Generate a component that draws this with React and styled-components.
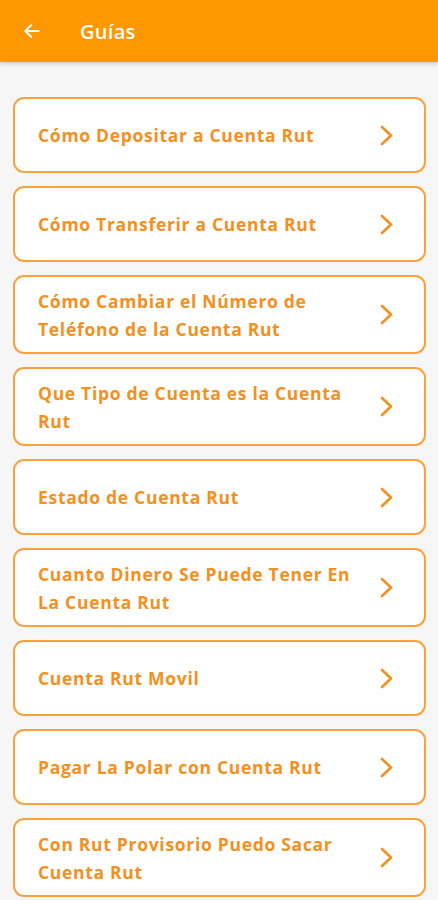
import React from "react";
import styled, { createGlobalStyle } from "styled-components";

const GlobalStyle = createGlobalStyle`
  body {
    margin: 0;
    background: #f6f6f6;
    font-family: "Open Sans", "Lato", sans-serif;
  }
`;

const Header = styled.header`
  height: 62px;
  background: #ff9800;
  display: flex;
  align-items: center;
  padding: 0 0 0 21px;
  box-shadow: 0 2px 4px rgba(0, 0, 0, 0.18);
  position: relative;
`;

const BackButton = styled.button`
  background: none;
  border: none;
  padding: 0;
  width: 22px;
  height: 22px;
  display: flex;
  align-items: center;
  justify-content: center;
  margin-right: 37px;
`;

const Title = styled.h1`
  margin: 0;
  color: #fff;
  font-size: 20px;
  font-weight: 600;
  letter-spacing: 0.3px;
`;

const List = styled.ul`
  list-style: none;
  margin: 0;
  padding: 35px 12px 20px 13px;
  display: flex;
  flex-direction: column;
  gap: 13px;
`;

const Card = styled.li`
  box-sizing: border-box;
  min-height: 76px;
  background: #fff;
  border: 2px solid #f7a23f;
  border-radius: 11px;
  display: flex;
  align-items: center;
  padding: 9.5px 30px 9.5px 23px;
`;

const Label = styled.span`
  flex: 1;
  color: #f39020;
  font-size: 17.5px;
  font-weight: 700;
  letter-spacing: 0.7px;
  line-height: 28px;
  padding-right: 18px;
`;

const Chevron = () => (
  <svg width="15" height="23" viewBox="0 0 15 23" fill="none">
    <path d="M3 3 L12 11.5 L3 20" stroke="#f39020" strokeWidth="2.6" strokeLinecap="round" strokeLinejoin="round" />
  </svg>
);

const guides = [
  "Cómo Depositar a Cuenta Rut",
  "Cómo Transferir a Cuenta Rut",
  "Cómo Cambiar el Número de Teléfono de la Cuenta Rut",
  "Que Tipo de Cuenta es la Cuenta Rut",
  "Estado de Cuenta Rut",
  "Cuanto Dinero Se Puede Tener En La Cuenta Rut",
  "Cuenta Rut Movil",
  "Pagar La Polar con Cuenta Rut",
  "Con Rut Provisorio Puedo Sacar Cuenta Rut",
];

export default function App() {
  return (
    <>
      <GlobalStyle />
      <Header>
        <BackButton aria-label="Volver">
          <svg width="20" height="20" viewBox="0 0 24 24" fill="none">
            <path d="M20 12H5M11 5l-7 7 7 7" stroke="#fff" strokeWidth="2.6" strokeLinecap="round" strokeLinejoin="round" />
          </svg>
        </BackButton>
        <Title>Guías</Title>
      </Header>
      <List>
        {guides.map((g) => (
          <Card key={g}>
            <Label>{g}</Label>
            <Chevron />
          </Card>
        ))}
      </List>
    </>
  );
}
